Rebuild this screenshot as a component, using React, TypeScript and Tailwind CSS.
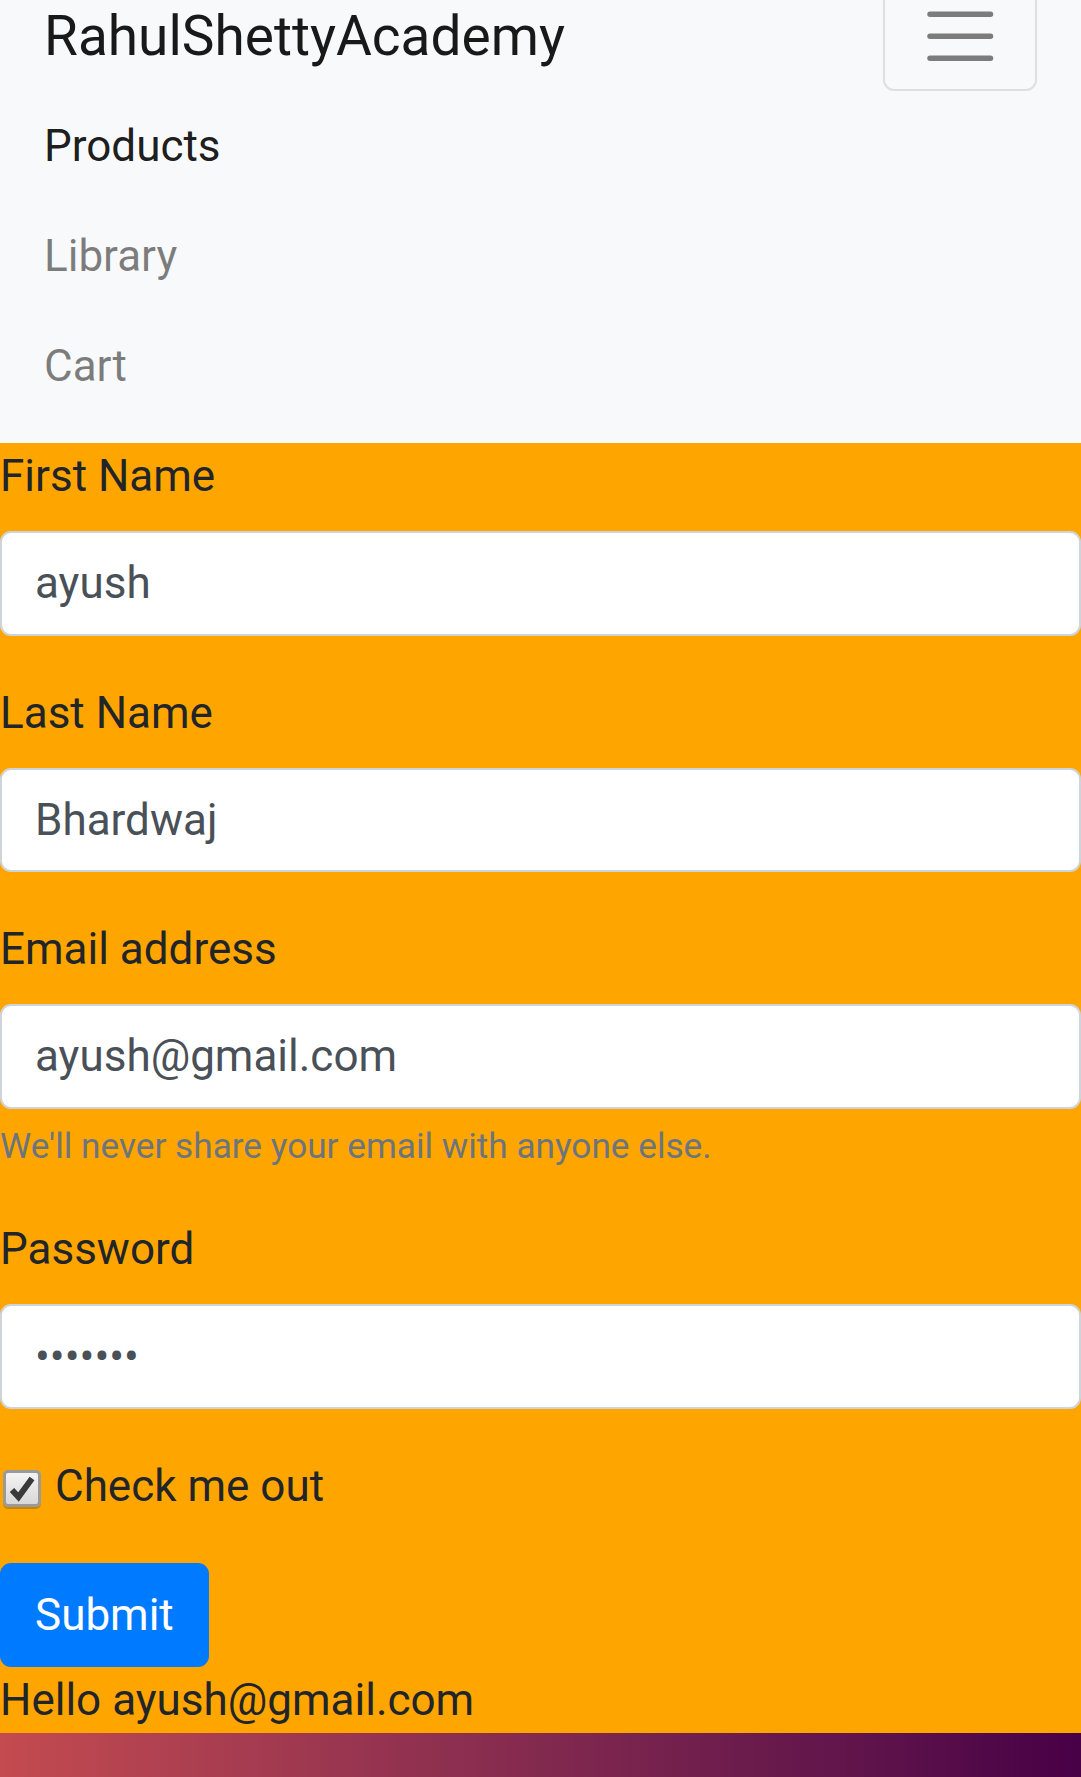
import React from 'react';

// page rendered at a device scale of 2.75 (1rem = 44px)
const fields = [
  { label: 'First Name', value: 'ayush', type: 'text' },
  { label: 'Last Name', value: 'Bhardwaj', type: 'text' },
  { label: 'Email address', value: 'ayush@gmail.com', type: 'email', help: "We'll never share your email with anyone else." },
  { label: 'Password', value: '1234567', type: 'password' },
];

function Field({ label, value, type, help }: { label: string; value: string; type: string; help?: string }) {
  return (
    <div className="mb-[44px]">
      <label className="block mb-[22px] text-[44px] leading-[66px] text-[#212529]">{label}</label>
      <input
        type={type}
        value={value}
        readOnly
        className="block w-full h-[104.5px] px-[33px] bg-white border-[2.75px] border-[#ced4da] rounded-[11px] text-[44px] leading-[66px] text-[#495057] outline-none font-[family-name:Roboto,sans-serif]"
      />
      {help && (
        <small className="block mt-[11px] text-[35.2px] leading-[52.8px] text-[#6c757d]">{help}</small>
      )}
    </div>
  );
}

export default function App() {
  return (
    <div className="font-[family-name:Roboto,'Liberation_Sans',sans-serif] bg-[#ffa500] overflow-hidden">
      {/* Navbar (page is scrolled a little) */}
      <nav className="-mt-[41px] bg-[#f8f9fa] px-[44px] pt-[22px] pb-[22px]">
        <div className="flex items-center justify-between h-[110px]">
          <a className="text-[55px] leading-[82.5px] text-black/90">RahulShettyAcademy</a>
          <button className="w-[154px] h-[110px] border-[2.75px] border-black/10 rounded-[11px] flex items-center justify-center">
            <svg width="82.5" height="82.5" viewBox="0 0 30 30">
              <path d="M4 7h22M4 15h22M4 23h22" stroke="rgba(0,0,0,0.5)" strokeWidth="2" strokeLinecap="round" />
            </svg>
          </button>
        </div>
        <ul>
          <li><a className="block py-[22px] text-[44px] leading-[66px] text-black/90">Products</a></li>
          <li><a className="block py-[22px] text-[44px] leading-[66px] text-black/50">Library</a></li>
          <li><a className="block py-[22px] text-[44px] leading-[66px] text-black/50">Cart</a></li>
        </ul>
      </nav>

      {/* Form */}
      <form className="bg-[#ffa500]">
        {fields.map((f) => (
          <Field key={f.label} {...f} />
        ))}

        <div className="relative pl-[55px] mb-[44px]">
          <span className="absolute left-[3px] top-[17px] w-[38px] h-[37px] rounded-[5px] border-[3px] border-[#9a9a9a] bg-linear-to-b from-[#f4f4f4] to-[#d8d8d8] shadow-[0_2px_0_#c98400]">
            <svg className="absolute -left-[3px] -top-[3px]" width="38" height="37" viewBox="0 0 38 37">
              <path d="M9 20 L15.5 27 L29 8.5" fill="none" stroke="#3a3a3a" strokeWidth="6" strokeLinejoin="miter" />
            </svg>
          </span>
          <label className="block text-[44px] leading-[66px] text-[#212529]">Check me out</label>
        </div>

        <button
          type="button"
          className="block h-[104.5px] px-[33px] bg-[#007bff] border-[2.75px] border-[#007bff] rounded-[11px] text-[44px] leading-[66px] text-white"
        >
          Submit
        </button>
        <p className="text-[44px] leading-[66px] text-[#212529]">Hello ayush@gmail.com</p>
      </form>

      <div className="h-[44px] bg-linear-to-r from-[#c44b4f] to-[#480046]" />
    </div>
  );
}
